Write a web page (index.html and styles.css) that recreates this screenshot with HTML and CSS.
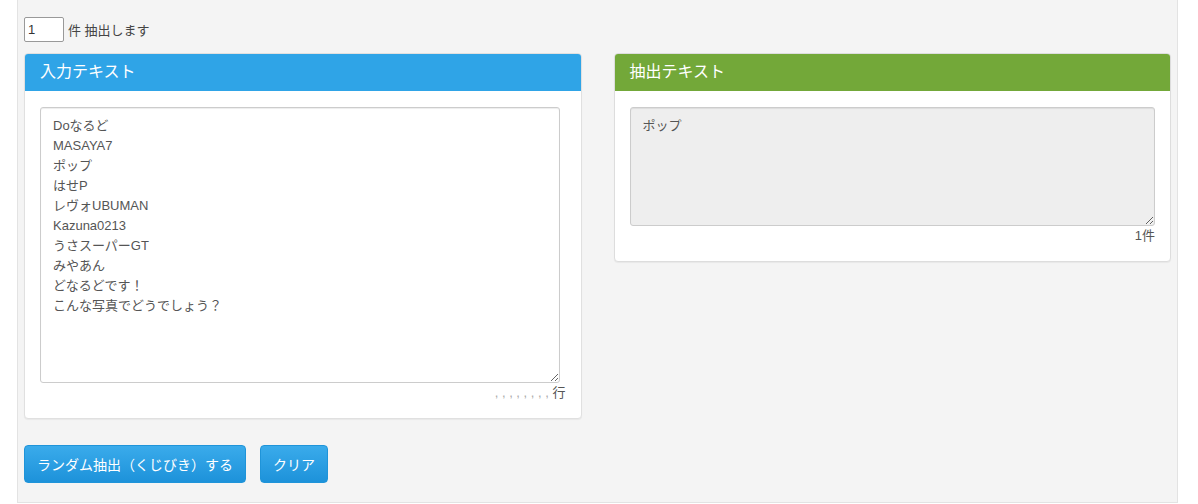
FILE: index.html
```html
<!DOCTYPE html>
<html lang="ja">
<head>
  <meta charset="UTF-8" />
  <meta name="viewport" content="width=device-width, initial-scale=1.0"/>
  <title>ランダム抽出</title>
  <link rel="stylesheet" href="styles.css">
</head>
<body>

<div class="well">
  <div class="count-row">
    <input type="text" class="count-input" value="1"/>
    <span>件 抽出します</span>
  </div>

  <div class="panels">
    <!-- 入力 -->
    <div class="panel panel-input">
      <div class="panel-heading">入力テキスト</div>
      <div class="panel-body">
        <textarea class="text-box input-box">Doなるど
MASAYA7
ポップ
はせP
レヴォUBUMAN
Kazuna0213
うさスーパーGT
みやあん
どなるどです！
こんな写真でどうでしょう？</textarea>
        <div class="note"><span class="commas">, , , , , , , , </span>行</div>
      </div>
    </div>

    <!-- 抽出結果 -->
    <div class="panel panel-output">
      <div class="panel-heading">抽出テキスト</div>
      <div class="panel-body">
        <textarea class="text-box output-box" readonly>ポップ</textarea>
        <div class="note">1件</div>
      </div>
    </div>
  </div>

  <div class="actions">
    <button class="btn">ランダム抽出（くじびき）する</button>
    <button class="btn">クリア</button>
  </div>
</div>

</body>
</html>
```

FILE: styles.css
```css
body {
  margin: 0;
  padding: 0;
  background: #fff;
  font-family: "Liberation Sans", "Noto Sans CJK JP", sans-serif;
  font-size: 14px;
  color: #555;
}
.well {
  margin-left: 17px;
  width: 1161px;
  box-sizing: border-box;
  background: #f4f4f4;
  border: 1px solid #e3e3e3;
  border-top: none;
  padding: 17px 6px 19px 6px;
}
.count-row {
  display: flex;
  align-items: center;
  gap: 4px;
  height: 25px;
  margin-bottom: 11px;
  font-size: 13px;
  color: #444;
}
.count-input {
  width: 40px;
  height: 25px;
  box-sizing: border-box;
  border: 1px solid #999;
  border-radius: 2px;
  padding: 2px 3px;
  font-family: inherit;
  font-size: 13px;
  color: #333;
  background: #fff;
}
.panels {
  display: grid;
  grid-template-columns: 1fr 1fr;
  gap: 32px;
  align-items: start;
}
.panel {
  background: #fff;
  border: 1px solid #ddd;
  border-radius: 4px;
  box-shadow: 0 1px 1px rgba(0, 0, 0, 0.05);
}
.panel-heading {
  height: 37px;
  line-height: 36px;
  padding: 0 15px;
  color: #fff;
  font-size: 16px;
  border-radius: 3px 3px 0 0;
}
.panel-input { border-color: #e0e0e0; }
.panel-input .panel-heading { background: #2fa4e7; }
.panel-output .panel-heading { background: #73a839; }
.panel-body {
  padding: 16px 15px 15px;
}
.text-box {
  display: block;
  box-sizing: border-box;
  border: 1px solid #ccc;
  border-radius: 3px;
  padding: 8px 12px 6px;
  font-family: inherit;
  font-size: 13px;
  line-height: 20px;
  color: #555;
  box-shadow: inset 0 1px 1px rgba(0, 0, 0, 0.075);
}
.input-box {
  width: 520px;
  height: 276px;
  background: #fff;
}
.output-box {
  width: 100%;
  height: 119px;
  background: #eee;
}
.note {
  text-align: right;
  font-size: 13px;
  line-height: 20px;
  color: #555;
}
.commas {
  color: #aaa;
}
.actions {
  display: flex;
  gap: 14px;
  margin-top: 26px;
}
.btn {
  height: 38px;
  padding: 0 12px;
  border: 1px solid #1f94d9;
  border-radius: 4px;
  background: linear-gradient(#3aabeb, #1d92da);
  color: #fff;
  font-family: inherit;
  font-size: 14px;
}
```
